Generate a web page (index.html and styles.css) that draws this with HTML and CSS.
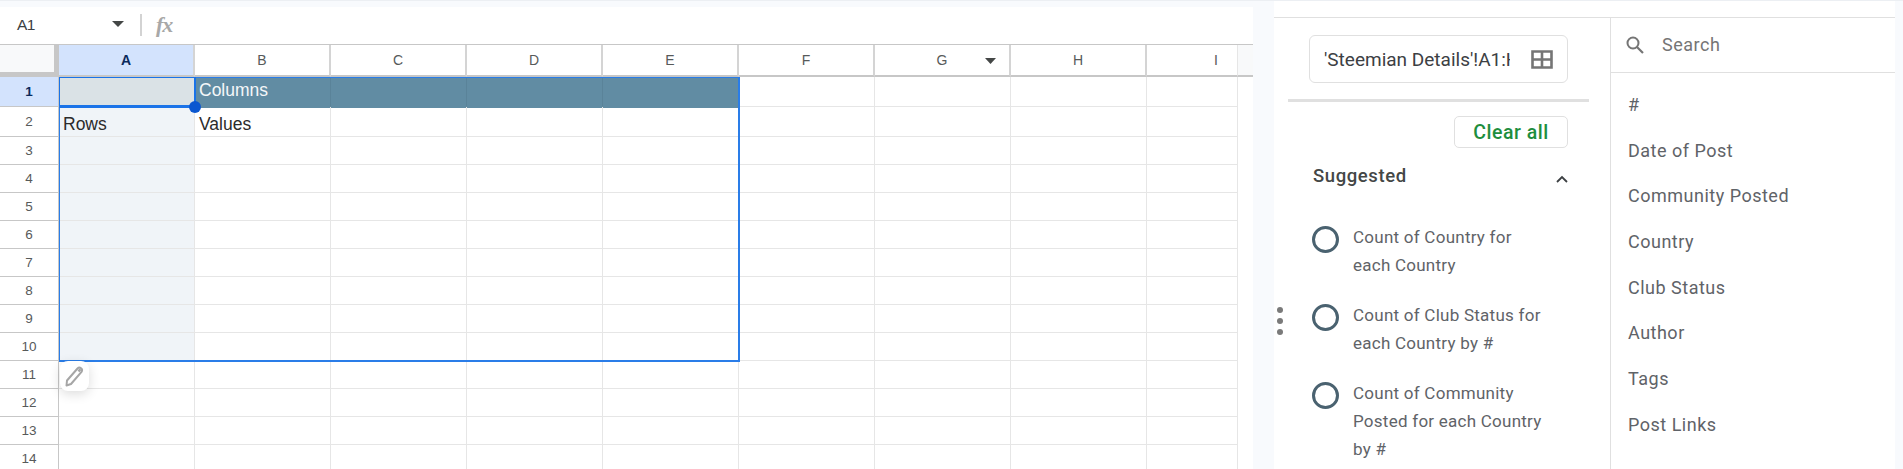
FILE: index.html
```html
<!DOCTYPE html>
<html>
<head>
  <title>Pivot table editor</title>
  <link rel="stylesheet" href="styles.css">
</head>
<body>
  <div class="sheet">
    <div class="formula-bar">
      <span class="name-box">A1</span>
      <svg class="name-arrow" width="12" height="6" viewBox="0 0 12 6"><path d="M0 0h12L6 6z" fill="#444746"/></svg>
      <span class="bar-sep"></span>
      <span class="fx">fx</span>
    </div>
    <div class="grid-wrap">
      <table class="grid">
        <colgroup>
          <col class="col-head"><col class="col"><col class="col"><col class="col"><col class="col"><col class="col"><col class="col"><col class="col"><col class="col"><col class="col-cut"><col class="col-gutter">
        </colgroup>
        <tr class="head-row">
          <th class="corner"></th><th class="on">A</th><th>B</th><th>C</th><th>D</th><th>E</th><th>F</th>
          <th class="has-arrow">G<svg class="col-arrow" width="11" height="6" viewBox="0 0 11 6"><path d="M0 0h11L5.500 6z" fill="#444746"/></svg></th>
          <th>H</th><th class="cut">I</th><th class="gutter"></th>
        </tr>
        <tr class="row-first">
          <th class="on">1</th><td class="active"></td><td class="band">Columns</td><td class="band"></td><td class="band"></td><td class="band"></td><td></td><td></td><td></td><td></td><td class="edge"></td>
        </tr>
        <tr class="row-second">
          <th>2</th><td class="tint">Rows</td><td>Values</td><td></td><td></td><td></td><td></td><td></td><td></td><td></td><td class="edge"></td>
        </tr>
        <tr><th>3</th><td class="tint"></td><td></td><td></td><td></td><td></td><td></td><td></td><td></td><td></td><td class="edge"></td></tr>
        <tr><th>4</th><td class="tint"></td><td></td><td></td><td></td><td></td><td></td><td></td><td></td><td></td><td class="edge"></td></tr>
        <tr><th>5</th><td class="tint"></td><td></td><td></td><td></td><td></td><td></td><td></td><td></td><td></td><td class="edge"></td></tr>
        <tr><th>6</th><td class="tint"></td><td></td><td></td><td></td><td></td><td></td><td></td><td></td><td></td><td class="edge"></td></tr>
        <tr><th>7</th><td class="tint"></td><td></td><td></td><td></td><td></td><td></td><td></td><td></td><td></td><td class="edge"></td></tr>
        <tr><th>8</th><td class="tint"></td><td></td><td></td><td></td><td></td><td></td><td></td><td></td><td></td><td class="edge"></td></tr>
        <tr><th>9</th><td class="tint"></td><td></td><td></td><td></td><td></td><td></td><td></td><td></td><td></td><td class="edge"></td></tr>
        <tr><th>10</th><td class="tint"></td><td></td><td></td><td></td><td></td><td></td><td></td><td></td><td></td><td class="edge"></td></tr>
        <tr><th>11</th><td></td><td></td><td></td><td></td><td></td><td></td><td></td><td></td><td></td><td class="edge"></td></tr>
        <tr><th>12</th><td></td><td></td><td></td><td></td><td></td><td></td><td></td><td></td><td></td><td class="edge"></td></tr>
        <tr><th>13</th><td></td><td></td><td></td><td></td><td></td><td></td><td></td><td></td><td></td><td class="edge"></td></tr>
        <tr><th>14</th><td></td><td></td><td></td><td></td><td></td><td></td><td></td><td></td><td></td><td class="edge"></td></tr>
      </table>
      <div class="selection"></div>
      <div class="active-cell"></div>
      <div class="fill-handle"></div>
      <div class="edit-btn">
        <svg width="21" height="23" viewBox="0 0 21 23"><path d="M2.500 20.500L3 15.500 13.500 3.500a2.600 2.600 0 0 1 4 3.300L7 19z" fill="none" stroke="#a6a6a6" stroke-width="2" stroke-linejoin="round"/><path d="M14.500 4.500l2 1.700" stroke="#a6a6a6" stroke-width="3"/></svg>
      </div>
    </div>
  </div>

  <div class="panel">
    <div class="panel-top"></div>
    <div class="panel-body">
      <div class="editor">
        <div class="range-box">
          <span class="range-text">'Steemian Details'!A1:H</span>
          <svg class="grid-icon" width="22" height="19" viewBox="0 0 22 19"><path d="M1.500 1.500h19v16h-19zM11 1.500v16M1.500 9.500h19" fill="none" stroke="#757575" stroke-width="2.600"/></svg>
        </div>
        <div class="thick-rule"></div>
        <div class="clear-row"><button class="btn-clear">Clear all</button></div>
        <div class="suggested-head">
          <span>Suggested</span>
          <svg width="12" height="8" viewBox="0 0 12 8"><path d="M1 7l5-5 5 5" fill="none" stroke="#3c4043" stroke-width="1.800"/></svg>
        </div>
        <ul class="suggest-list">
          <li><span class="radio"></span><span>Count of Country for<br>each Country</span></li>
          <li><span class="radio"></span><span>Count of Club Status for<br>each Country by #</span></li>
          <li><span class="radio"></span><span>Count of Community<br>Posted for each Country<br>by #</span></li>
        </ul>
        <div class="drag-dots"><i></i><i></i><i></i></div>
      </div>
      <div class="fields">
        <div class="search-row">
          <svg width="20" height="20" viewBox="0 0 20 20"><circle cx="8" cy="8" r="5.500" fill="none" stroke="#757575" stroke-width="2"/><path d="M12 12l6 6" stroke="#757575" stroke-width="2.200"/></svg>
          <span>Search</span>
        </div>
        <ul class="field-list">
          <li>#</li>
          <li>Date of Post</li>
          <li>Community Posted</li>
          <li>Country</li>
          <li>Club Status</li>
          <li>Author</li>
          <li>Tags</li>
          <li>Post Links</li>
        </ul>
      </div>
    </div>
  </div>
</body>
</html>
```

FILE: styles.css
```css
html, body {
  height: 469px;
  overflow: hidden;
}

body {
  margin: 0;
  display: flex;
  background-color: #f8fafd;
  border-top: 1px solid #eceff3;
  box-sizing: border-box;
}

.sheet {
  width: 1253px;
  margin-top: 6px;
  background-color: #fff;
  flex: none;
}

.formula-bar {
  height: 37px;
  display: flex;
  align-items: center;
  box-sizing: border-box;
  padding-bottom: 1px;
  font-family: "Liberation Sans", Arial, sans-serif;
}

.name-box {
  width: 95px;
  padding-left: 17px;
  font-size: 15.500px;
  letter-spacing: -0.500px;
  color: #3c4043;
}

.name-arrow {
  margin-right: 16px;
  margin-top: -2px;
}

.bar-sep {
  width: 2px;
  height: 22px;
  background-color: #d3d3d3;
}

.fx {
  margin-left: 14px;
  font-family: "Liberation Serif", serif;
  font-style: italic;
  font-size: 22px;
  font-weight: bold;
  color: #a8a8a8;
  letter-spacing: -1px;
}

.grid-wrap {
  position: relative;
  height: 425px;
  overflow: hidden;
  border-top: 1px solid #c7c7c7;
}

.grid {
  border-collapse: separate;
  border-spacing: 0;
  table-layout: fixed;
  width: 1253px;
  font-family: "Liberation Sans", Arial, sans-serif;
}

.col-head { width: 59px; }
.col { width: 136px; }
.col-cut { width: 91px; }
.col-gutter { width: 16px; }

.grid th {
  padding: 0;
  font-weight: normal;
  font-size: 13.500px;
  color: #575a5a;
  background-color: #fff;
  border-right: 1px solid #c7c7c7;
  border-bottom: 1px solid #c7c7c7;
  box-sizing: border-box;
}

.grid td {
  padding: 0 0 1px 4px;
  height: 28px;
  box-sizing: border-box;
  font-size: 17.500px;
  color: #2b2b2b;
  border-right: 1px solid #e6e6e6;
  border-bottom: 1px solid #e6e6e6;
  vertical-align: bottom;
  white-space: nowrap;
  overflow: hidden;
}

.head-row th {
  height: 32px;
  font-size: 14px;
  border-bottom: 2px solid #c7c7c7;
  border-right: 2px solid #d4d4d4;
}

.grid .corner {
  background-color: #f8f9fa;
  border-right: 5px solid #c7c7c7;
  border-bottom: 5px solid #c7c7c7;
}

.grid th.on {
  background-color: #d3e3fd;
  color: #0b2a5c;
  font-weight: bold;
}

.grid .has-arrow {
  position: relative;
}

.col-arrow {
  position: absolute;
  right: 13px;
  top: 13px;
}

.grid .cut {
  text-align: left;
  padding-left: 67px;
  border-right: 1px solid #e6e6e6;
}

.grid .gutter {
  background-color: #f8f9fa;
  border-right: none;
}

.grid td.edge {
  border-right: none;
  border-bottom: none;
}

.row-first td {
  height: 30px;
}

.row-second td {
  height: 30px;
}

.grid td.band {
  padding-bottom: 2px;
  vertical-align: middle;
  background-color: #618ca3;
  color: #f4f7f9;
  border-right-color: #5a8399;
  border-bottom-color: #618ca3;
  box-shadow: 0 1px 0 #618ca3;
}

.grid td.active {
  background-color: #dae2e6;
}

.grid td.tint {
  background-color: #f0f4f8;
}

.selection {
  position: absolute;
  left: 59px;
  top: 32px;
  width: 678px;
  height: 282px;
  border: 1px solid #2a7de8;
  border-width: 1px 2px 2px 1px;
  pointer-events: none;
}

.active-cell {
  position: absolute;
  left: 59px;
  top: 32px;
  width: 134px;
  height: 27px;
  border: 1px solid #1a73e8;
  border-bottom-width: 3px;
  border-right-width: 2px;
}

.fill-handle {
  position: absolute;
  left: 189px;
  top: 56px;
  width: 12px;
  height: 12px;
  border-radius: 50%;
  background-color: #0b57d0;
}

.edit-btn {
  position: absolute;
  left: 60px;
  top: 316px;
  width: 29px;
  height: 30px;
  display: flex;
  align-items: center;
  justify-content: center;
  background-color: #fff;
  border-radius: 8px;
  box-shadow: 0 3px 12px rgba(0, 0, 0, 0.14);
}

.panel {
  width: 621px;
  margin-left: 21px;
  height: 468px;
  flex: none;
  background-color: #fff;
  font-family: Roboto, sans-serif;
}

.panel-top {
  height: 16px;
  border-bottom: 1px solid #e0e0e0;
}

.panel-body {
  display: flex;
  height: 451px;
}

.editor {
  position: relative;
  width: 336px;
  border-right: 1px solid #e0e0e0;
  flex: none;
}

.range-box {
  margin: 17px 0 0 35px;
  width: 259px;
  height: 48px;
  box-sizing: border-box;
  border: 1px solid #e0e0e0;
  border-radius: 6px;
  display: flex;
  align-items: center;
  padding-left: 14px;
}

.range-text {
  width: 186px;
  overflow: hidden;
  white-space: nowrap;
  font-size: 19px;
  color: #3c4043;
}

.grid-icon {
  margin-left: 21px;
}

.thick-rule {
  margin: 16px 0 0 14px;
  width: 301px;
  height: 3px;
  background-color: #e0e0e0;
}

.clear-row {
  margin: 14px 0 0 180px;
}

.btn-clear {
  display: block;
  width: 114px;
  height: 32px;
  padding: 0;
  border: 1px solid #e0e0e0;
  border-radius: 5px;
  background-color: #fff;
  color: #1e8e3e;
  font-family: Roboto, sans-serif;
  font-size: 19.500px;
  letter-spacing: 0.500px;
  font-weight: 500;
}

.suggested-head {
  margin: 16px 0 0 39px;
  width: 255px;
  display: flex;
  justify-content: space-between;
  align-items: center;
  font-size: 18.500px;
  letter-spacing: 0.600px;
  font-weight: 500;
  color: #444746;
  height: 24px;
}

.suggested-head svg {
  margin-top: 6px;
}

.suggest-list {
  list-style: none;
  margin: 35px 0 0 38px;
  padding: 0;
}

.suggest-list li {
  display: flex;
  gap: 14px;
  font-size: 17px;
  letter-spacing: 0.250px;
  line-height: 28px;
  color: #5f6368;
  margin-bottom: 22px;
}

.radio {
  width: 27px;
  height: 27px;
  margin-top: 3px;
  box-sizing: border-box;
  border: 3px solid #4a6270;
  border-radius: 50%;
  flex: none;
}

.drag-dots {
  position: absolute;
  left: 3px;
  top: 289px;
  display: flex;
  flex-direction: column;
  gap: 5px;
}

.drag-dots i {
  display: block;
  width: 6px;
  height: 6px;
  border-radius: 50%;
  background-color: #7a7a7a;
}

.fields {
  flex: 1;
}

.search-row {
  height: 54px;
  box-sizing: content-box;
  display: flex;
  align-items: center;
  gap: 17px;
  padding-left: 14px;
  border-bottom: 1px solid #e0e0e0;
  font-size: 18px;
  letter-spacing: 0.500px;
  color: #757575;
}

.search-row span {
  margin-bottom: 2px;
}

.field-list {
  list-style: none;
  margin: 20px 0 0;
  padding: 0 0 0 17px;
}

.field-list li {
  height: 45.700px;
  line-height: 24px;
  font-size: 18px;
  letter-spacing: 0.500px;
  color: #5f6368;
}
```
